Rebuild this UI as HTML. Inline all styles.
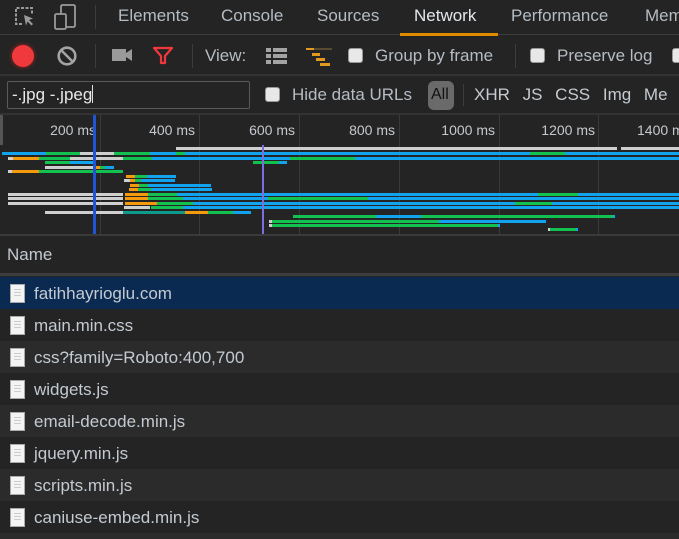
<!DOCTYPE html>
<html style="width:679px;height:539px;overflow:hidden"><head><meta charset="utf-8"><style>
*{margin:0;padding:0;box-sizing:border-box}
body{width:679px;height:539px;overflow:hidden;background:#242424;font-family:"Liberation Sans",Helvetica,Arial,sans-serif;color:#bdc6cf;position:relative}
.a{position:absolute}
.t{font-size:17px;top:6px;color:#b5bcc3}
.sep{position:absolute;width:1px;background:#3d3d3d}
.cb{position:absolute;width:15px;height:15px;border-radius:3px;background:#e8e8e8;border:1px solid #999}
.b{position:absolute;height:3px}
.g{background:#cfcfcf}.o{background:#f39a0d}.n{background:#12c14f}.u{background:#11a3ee}.e{background:#0f9a8e}
.row{position:absolute;left:0;width:679px;height:32px;font-size:17px;color:#c3cad1}
.row span{position:absolute;left:34px;top:7px}
.ic{position:absolute;left:10px;top:7px;width:15px;height:19px;background:#f4f4f4;border:1px solid #aaa}
.ic:after{content:"";position:absolute;left:3px;top:4px;width:7px;height:9px;background:repeating-linear-gradient(#ccc 0 1px,transparent 1px 3px)}
.gl{position:absolute;top:115px;height:120px;width:1px;background:#3a3a3a}
.lbl{position:absolute;top:122px;font-size:14px;color:#c5c9ce;text-align:right;width:90px}
</style></head><body>
<div class="a" style="left:0;top:0;width:679px;height:35px;background:#242424;border-bottom:1px solid #3d3d3d"></div>
<svg class="a" style="left:13px;top:5px" width="24" height="24" viewBox="0 0 24 24"><path d="M9 19H3V3h16v6" fill="none" stroke="#9a9a9a" stroke-width="2" stroke-dasharray="3 1.5"/><path d="M11 10l9 3.5-4 1.5 4 4-1.5 1.5-4-4-1.5 4z" fill="#9a9a9a"/></svg>
<svg class="a" style="left:52px;top:4px" width="26" height="26" viewBox="0 0 26 26"><rect x="9" y="1" width="14" height="22" rx="1.5" fill="none" stroke="#9a9a9a" stroke-width="1.8"/><rect x="3" y="10" width="11" height="15" rx="1.5" fill="#242424" stroke="#9a9a9a" stroke-width="1.8"/></svg>
<div class="sep" style="left:95px;top:5px;height:24px"></div>
<div class="a t" style="left:118px">Elements</div>
<div class="a t" style="left:221px">Console</div>
<div class="a t" style="left:317px">Sources</div>
<div class="a t" style="left:414px;color:#e4e8ec">Network</div>
<div class="a" style="left:400px;top:33px;width:98px;height:3px;background:#e08a00"></div>
<div class="a t" style="left:511px">Performance</div>
<div class="a t" style="left:645px">Mem</div>
<div class="a" style="left:0;top:74px;width:679px;height:2px;background:#333"></div>
<div class="a" style="left:12px;top:45px;width:22px;height:22px;border-radius:50%;background:#f0393c;box-shadow:0 0 4px #b22"></div>
<svg class="a" style="left:56px;top:45px" width="22" height="22" viewBox="0 0 22 22"><circle cx="11" cy="11" r="8.3" fill="none" stroke="#a3a3a3" stroke-width="2.6"/><path d="M5.5 5.5l11 11" stroke="#a3a3a3" stroke-width="2.6"/></svg>
<div class="sep" style="left:95px;top:44px;height:24px"></div>
<svg class="a" style="left:112px;top:48px" width="22" height="14" viewBox="0 0 22 14"><rect x="0" y="1" width="14" height="12" fill="#9a9a9a"/><path d="M14 5l6-4v12l-6-4z" fill="#9a9a9a"/></svg>
<svg class="a" style="left:152px;top:46px" width="22" height="20" viewBox="0 0 22 20"><path d="M2 2h18l-7 8v7H9v-7z" fill="none" stroke="#f0393c" stroke-width="2.2" stroke-linejoin="round"/></svg>
<div class="sep" style="left:192px;top:44px;height:24px"></div>
<div class="a" style="left:205px;top:46px;font-size:17px;color:#b5bcc3">View:</div>
<svg class="a" style="left:266px;top:47px" width="22" height="18" viewBox="0 0 22 18"><g fill="#a3a3a3"><rect x="0" y="1" width="5" height="4"/><rect x="7" y="1" width="14" height="4"/><rect x="0" y="7" width="5" height="4"/><rect x="7" y="7" width="14" height="4"/><rect x="0" y="13" width="5" height="4"/><rect x="7" y="13" width="14" height="4"/></g></svg>
<svg class="a" style="left:306px;top:47px" width="28" height="20" viewBox="0 0 28 20"><rect x="0" y="1" width="26" height="2" fill="#5a4a30"/><rect x="0" y="1" width="8" height="2" fill="#e09a20"/><rect x="6" y="6" width="8" height="3" fill="#e09a20"/><rect x="10" y="11" width="9" height="3" fill="#e09a20"/><rect x="14" y="16" width="10" height="3" fill="#e09a20"/></svg>
<div class="cb" style="left:348px;top:48px"></div>
<div class="a" style="left:375px;top:46px;font-size:17px;color:#b5bcc3">Group by frame</div>
<div class="sep" style="left:515px;top:44px;height:24px"></div>
<div class="cb" style="left:530px;top:48px"></div>
<div class="a" style="left:557px;top:46px;font-size:17px;color:#b5bcc3">Preserve log</div>
<div class="cb" style="left:672px;top:48px"></div>
<div class="a" style="left:7px;top:81px;width:243px;height:28px;border:1px solid #5a5a5a;border-radius:2px;background:#242424"></div>
<div class="a" style="left:12px;top:85px;font-size:17px;color:#e8e8e8">-.jpg -.jpeg<span style="display:inline-block;width:1px;height:18px;background:#ddd;vertical-align:-3px"></span></div>
<div class="cb" style="left:265px;top:87px"></div>
<div class="a" style="left:292px;top:85px;font-size:17px;color:#b5bcc3">Hide data URLs</div>
<div class="a" style="left:428px;top:81px;width:26px;height:29px;border-radius:6px;background:#6a6a6a"></div>
<div class="a" style="left:431px;top:86px;font-size:16px;color:#111">All</div>
<div class="sep" style="left:463px;top:84px;height:22px"></div>
<div class="a" style="left:474px;top:85px;font-size:17px;color:#c5cbd1;word-spacing:8px">XHR JS CSS Img Me</div>
<div class="a" style="left:0;top:113px;width:679px;height:2px;background:#333"></div>
<div class="a" style="left:0;top:115px;width:3px;height:30px;background:#555"></div>
<div class="gl" style="left:100px"></div><div class="gl" style="left:199px"></div><div class="gl" style="left:299px"></div><div class="gl" style="left:399px"></div><div class="gl" style="left:499px"></div><div class="gl" style="left:598px"></div>
<div class="lbl" style="left:6px">200 ms</div><div class="lbl" style="left:105px">400 ms</div><div class="lbl" style="left:205px">600 ms</div><div class="lbl" style="left:305px">800 ms</div><div class="lbl" style="left:405px">1000 ms</div><div class="lbl" style="left:505px">1200 ms</div><div class="lbl" style="left:605px;text-align:left;padding-left:32px">1400 ms</div>
<div class="b g" style="left:176px;top:147px;width:441px"></div><div class="b g" style="left:621px;top:147px;width:58px"></div>
<div class="b u" style="left:2px;top:152px;width:44px"></div><div class="b n" style="left:46px;top:152px;width:34px"></div><div class="b g" style="left:80px;top:152px;width:34px"></div><div class="b n" style="left:114px;top:152px;width:36px"></div><div class="b u" style="left:150px;top:152px;width:26px"></div><div class="b n" style="left:176px;top:152px;width:9px"></div><div class="b u" style="left:185px;top:152px;width:345px"></div><div class="b n" style="left:530px;top:152px;width:35px"></div><div class="b u" style="left:565px;top:152px;width:114px"></div>
<div class="b g" style="left:8px;top:157px;width:5px"></div><div class="b o" style="left:13px;top:157px;width:26px"></div><div class="b n" style="left:39px;top:157px;width:31px"></div><div class="b g" style="left:70px;top:157px;width:53px"></div><div class="b n" style="left:123px;top:157px;width:29px"></div><div class="b u" style="left:152px;top:157px;width:138px"></div><div class="b n" style="left:290px;top:157px;width:65px"></div><div class="b u" style="left:355px;top:157px;width:324px"></div>
<div class="b n" style="left:45px;top:161px;width:25px"></div><div class="b u" style="left:70px;top:161px;width:25px"></div><div class="b n" style="left:253px;top:161px;width:26px"></div><div class="b u" style="left:279px;top:161px;width:8px"></div>
<div class="b g" style="left:45px;top:166px;width:50px"></div><div class="b o" style="left:95px;top:166px;width:5px"></div><div class="b n" style="left:100px;top:166px;width:5px"></div><div class="b u" style="left:105px;top:166px;width:9px"></div>
<div class="b g" style="left:8px;top:170px;width:4px"></div><div class="b o" style="left:12px;top:170px;width:27px"></div><div class="b n" style="left:39px;top:170px;width:84px"></div>
<div class="b o" style="left:126px;top:175px;width:9px"></div><div class="b n" style="left:135px;top:175px;width:12px"></div><div class="b u" style="left:147px;top:175px;width:29px"></div>
<div class="b g" style="left:124px;top:179px;width:6px"></div><div class="b o" style="left:130px;top:179px;width:5px"></div><div class="b n" style="left:135px;top:179px;width:6px"></div><div class="b u" style="left:141px;top:179px;width:34px"></div>
<div class="b o" style="left:130px;top:184px;width:9px"></div><div class="b n" style="left:139px;top:184px;width:9px"></div><div class="b u" style="left:148px;top:184px;width:63px"></div>
<div class="b o" style="left:129px;top:188px;width:9px"></div><div class="b n" style="left:138px;top:188px;width:13px"></div><div class="b u" style="left:151px;top:188px;width:61px"></div>
<div class="b g" style="left:8px;top:193px;width:115px"></div><div class="b o" style="left:125px;top:193px;width:23px"></div><div class="b n" style="left:148px;top:193px;width:29px"></div><div class="b u" style="left:177px;top:193px;width:361px"></div><div class="b n" style="left:538px;top:193px;width:40px"></div><div class="b u" style="left:578px;top:193px;width:101px"></div>
<div class="b g" style="left:8px;top:197px;width:115px"></div><div class="b o" style="left:125px;top:197px;width:23px"></div><div class="b n" style="left:148px;top:197px;width:35px"></div><div class="b u" style="left:183px;top:197px;width:85px"></div><div class="b n" style="left:268px;top:197px;width:100px"></div><div class="b u" style="left:368px;top:197px;width:311px"></div>
<div class="b g" style="left:8px;top:202px;width:115px"></div><div class="b o" style="left:125px;top:202px;width:32px"></div><div class="b n" style="left:157px;top:202px;width:36px"></div><div class="b u" style="left:193px;top:202px;width:322px"></div><div class="b n" style="left:515px;top:202px;width:37px"></div><div class="b u" style="left:552px;top:202px;width:127px"></div>
<div class="b g" style="left:124px;top:206px;width:26px"></div><div class="b n" style="left:151px;top:206px;width:32px"></div><div class="b u" style="left:183px;top:206px;width:496px"></div>
<div class="b g" style="left:45px;top:211px;width:78px"></div><div class="b e" style="left:123px;top:211px;width:62px"></div><div class="b o" style="left:185px;top:211px;width:23px"></div><div class="b n" style="left:208px;top:211px;width:25px"></div><div class="b u" style="left:233px;top:211px;width:18px"></div>
<div class="b n" style="left:293px;top:215px;width:83px"></div><div class="b u" style="left:376px;top:215px;width:45px"></div><div class="b n" style="left:421px;top:215px;width:192px"></div><div class="b u" style="left:613px;top:215px;width:2px"></div>
<div class="b g" style="left:269px;top:220px;width:3px"></div><div class="b n" style="left:272px;top:220px;width:167px"></div><div class="b u" style="left:439px;top:220px;width:107px"></div>
<div class="b g" style="left:269px;top:224px;width:3px"></div><div class="b n" style="left:272px;top:224px;width:226px"></div><div class="b u" style="left:498px;top:224px;width:2px"></div>
<div class="b g" style="left:548px;top:228px;width:2px"></div><div class="b n" style="left:550px;top:228px;width:26px"></div><div class="b u" style="left:576px;top:228px;width:2px"></div>
<div class="a" style="left:93px;top:115px;width:3px;height:120px;background:#1f56d8"></div>
<div class="a" style="left:262px;top:145px;width:2px;height:90px;background:#7b6fe0"></div>
<div class="a" style="left:0;top:234px;width:679px;height:2px;background:#3a3a3a"></div>
<div class="a" style="left:7px;top:245px;font-size:17px;color:#c3cad1">Name</div>
<div class="a" style="left:0;top:273px;width:679px;height:3px;background:#3d3d3d"></div>
<div class="row" style="top:277px;background:#0b2a52"><div class="ic"></div><span>fatihhayrioglu.com</span></div>
<div class="row" style="top:309px;background:#242424"><div class="ic"></div><span>main.min.css</span></div>
<div class="row" style="top:341px;background:#2b2b2b"><div class="ic"></div><span>css?family=Roboto:400,700</span></div>
<div class="row" style="top:373px;background:#242424"><div class="ic"></div><span>widgets.js</span></div>
<div class="row" style="top:405px;background:#2b2b2b"><div class="ic"></div><span>email-decode.min.js</span></div>
<div class="row" style="top:437px;background:#242424"><div class="ic"></div><span>jquery.min.js</span></div>
<div class="row" style="top:469px;background:#2b2b2b"><div class="ic"></div><span>scripts.min.js</span></div>
<div class="row" style="top:501px;background:#242424"><div class="ic"></div><span>caniuse-embed.min.js</span></div>
<div class="row" style="top:533px;height:6px;overflow:hidden;background:#2b2b2b"><div class="ic"></div></div>
</body></html>
